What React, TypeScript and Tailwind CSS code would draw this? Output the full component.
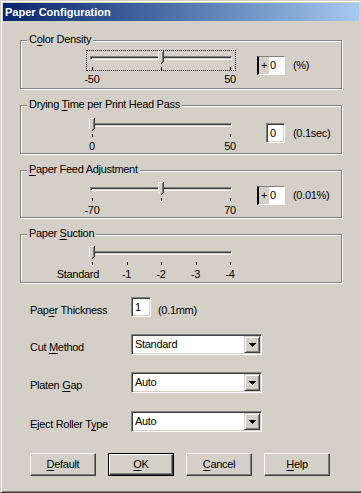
import type { ReactNode } from "react";

const raisedBtn =
  "border border-t-white border-l-white border-b-[#404040] border-r-[#404040] shadow-[inset_-1px_-1px_0_#808080]";
const sunken =
  "border border-t-[#808080] border-l-[#808080] border-b-white border-r-white shadow-[inset_1px_1px_0_#404040,inset_-1px_-1px_0_#d4d0c8]";

function U({ c }: { c: string }) {
  return <span className="underline decoration-1 underline-offset-[2px]">{c}</span>;
}

type SliderDef = {
  title: ReactNode;
  labels: string[];
  ticks: number;
  pos: number;
  focus?: boolean;
  unit: string;
  value: string;
  plus?: boolean;
  box: string;
  rowMt: string;
  editMt: string;
};

const sliders: SliderDef[] = [
  {
    title: <>C<U c="o" />lor Density</>,
    labels: ["-50", "50"],
    ticks: 3,
    pos: 0.5,
    focus: true,
    unit: "(%)",
    value: "0",
    plus: true,
    box: "mt-[19px] h-[49px]",
    rowMt: "mt-[4px]",
    editMt: "mt-[6px]",
  },
  {
    title: <>Drying <U c="T" />ime per Print Head Pass</>,
    labels: ["0", "50"],
    ticks: 2,
    pos: 0,
    unit: "(0.1sec)",
    value: "0",
    box: "mt-[16px] h-[49px]",
    rowMt: "mt-[6px]",
    editMt: "mt-[6px]",
  },
  {
    title: <><U c="P" />aper Feed Adjustment</>,
    labels: ["-70", "70"],
    ticks: 3,
    pos: 0.5,
    unit: "(0.01%)",
    value: "0",
    plus: true,
    box: "mt-[16px] h-[48px]",
    rowMt: "mt-[5px]",
    editMt: "mt-[5px]",
  },
  {
    title: <>Paper <U c="S" />uction</>,
    labels: ["Standard", "-1", "-2", "-3", "-4"],
    ticks: 5,
    pos: 0,
    unit: "",
    value: "",
    box: "mt-[16px] h-[49px]",
    rowMt: "mt-[5px]",
    editMt: "",
  },
];

function Thumb({ left }: { left: number }) {
  return (
    <svg
      className="absolute top-0"
      style={{ left }}
      width="6"
      height="14"
      viewBox="0 0 6 14"
      shapeRendering="crispEdges"
    >
      <polygon points="0,0 6,0 6,10 3,13 0,10" fill="#d4d0c8" />
      <path d="M0.5 10V0.5H5" stroke="#fff" fill="none" />
      <path d="M0.5 10.5L2.5 12.5" stroke="#fff" fill="none" />
      <path d="M4.5 1V10.5L3 12" stroke="#808080" fill="none" />
      <path d="M5.5 0V10.5L3 13" stroke="#404040" fill="none" />
    </svg>
  );
}

function Slider({ s }: { s: SliderDef }) {
  return (
    <div className="w-[150px]">
      <div
        className={`relative h-[21px] border border-dotted ${
          s.focus ? "border-black" : "border-transparent"
        }`}
      >
        <div className="ml-[3px] mt-[5px] h-[4px] w-[142px] border border-t-[#808080] border-l-[#808080] border-b-white border-r-white shadow-[inset_1px_1px_0_#404040]" />
        <div className="ml-[5px] mt-[7px] flex w-[139px] justify-between">
          {Array.from({ length: s.ticks }).map((_, i) => (
            <div key={i} className="h-[3px] w-px bg-black" />
          ))}
        </div>
        <Thumb left={2 + s.pos * 138} />
      </div>
      <div className="-ml-[6px] mt-[2px] flex w-[162px] justify-between">
        {s.labels.map((l, i) => (
          <div
            key={l}
            className={`flex w-[24px] whitespace-nowrap ${
              l === "Standard" && i === 0 ? "justify-end pr-[5px]" : "justify-center"
            }`}
          >
            {l}
          </div>
        ))}
      </div>
    </div>
  );
}

function Group({ s }: { s: SliderDef }) {
  return (
    <div
      className={`ml-[17px] w-[322px] border border-[#808080] shadow-[inset_1px_1px_0_#fff,1px_1px_0_#fff] ${s.box}`}
    >
      <div className="-mt-[8px] ml-[6px] w-fit bg-[#d4d0c8] px-[2px]">{s.title}</div>
      <div className={`ml-[65px] flex items-start ${s.rowMt}`}>
        <Slider s={s} />
        {s.unit && (
          <div className={`flex items-center ${s.editMt}`}>
            <div className="flex w-[49px] justify-end">
              {s.plus ? (
                <div className="flex h-[19px] w-[28px] border-t border-l-[2px] border-r border-b border-t-[#808080] border-l-black border-r-white border-b-white">
                  <span className="flex w-[10px] items-center justify-center">+</span>
                  <span className="flex flex-1 items-center bg-white pl-[1px]">{s.value}</span>
                </div>
              ) : (
                <div className={`flex h-[20px] w-[19px] items-center bg-white pl-[3px] ${sunken}`}>
                  {s.value}
                </div>
              )}
            </div>
            <span className="ml-[8px]">{s.unit}</span>
          </div>
        )}
      </div>
    </div>
  );
}

function Combo({ value }: { value: string }) {
  return (
    <div className={`flex h-[21px] w-[131px] items-center bg-white p-[1px] ${sunken}`}>
      <span className="flex-1 pl-[2px]">{value}</span>
      <span
        className={`flex h-[17px] w-[16px] items-center justify-center border border-t-[#d4d0c8] border-l-[#d4d0c8] border-b-[#404040] border-r-[#404040] bg-[#d4d0c8] shadow-[inset_1px_1px_0_#fff,inset_-1px_-1px_0_#808080]`}
      >
        <svg width="7" height="4" viewBox="0 0 7 4" shapeRendering="crispEdges">
          <path d="M0 0h7v1H0zM1 1h5v1H1zM2 2h3v1H2zM3 3h1v1H3z" fill="#000" />
        </svg>
      </span>
    </div>
  );
}

function Row({ label, mt, children }: { label: ReactNode; mt: string; children: ReactNode }) {
  return (
    <div className={`flex items-start ${mt}`}>
      <div className="mt-[7px] w-[101px] whitespace-nowrap">{label}</div>
      {children}
    </div>
  );
}

function Btn({ children, def }: { children: ReactNode; def?: boolean }) {
  if (def) {
    return (
      <div className="h-[23px] w-[66px] border border-black">
        <div className={`flex h-full w-full items-center justify-center ${raisedBtn}`}>{children}</div>
      </div>
    );
  }
  return (
    <div className={`flex h-[23px] w-[66px] items-center justify-center ${raisedBtn}`}>{children}</div>
  );
}

export default function App() {
  return (
    <div className="h-[493px] w-[361px] overflow-hidden border-l border-t border-b border-l-[#d4d0c8] border-t-[#d4d0c8] border-b-[#404040] bg-[#d4d0c8] pl-[2px] pt-[2px] pr-[2px] shadow-[inset_1px_1px_0_#fff,inset_0_-1px_0_#808080] font-['Liberation_Sans',Arial,sans-serif] text-[11px] leading-[13px] tracking-[-0.3px] text-black">
      <div className="flex h-[18px] items-center bg-gradient-to-r from-[#0a246a] to-[#a6caf0] pl-[2px] text-[11px] font-bold tracking-normal text-white">
        Paper Configuration
      </div>

      {sliders.map((s, i) => (
        <Group key={i} s={s} />
      ))}

      <div className="ml-[27px] mt-[14px]">
        <Row label={<>Pap<U c="e" />r Thickness</>} mt="">
          <div className={`flex h-[20px] w-[20px] items-center bg-white pl-[3px] ${sunken}`}>1</div>
          <span className="ml-[7px] mt-[7px]">(0.1mm)</span>
        </Row>
        <Row label={<>Cut <U c="M" />ethod</>} mt="mt-[17px]">
          <Combo value="Standard" />
        </Row>
        <Row label={<>Platen <U c="G" />ap</>} mt="mt-[17px]">
          <Combo value="Auto" />
        </Row>
        <Row label={<>Eject Roller T<U c="y" />pe</>} mt="mt-[18px]">
          <Combo value="Auto" />
        </Row>

        <div className="mt-[21px] flex gap-[12px]">
          <Btn>
            <U c="D" />efault
          </Btn>
          <Btn def>
            <U c="O" />K
          </Btn>
          <Btn>
            <U c="C" />ancel
          </Btn>
          <Btn>
            <U c="H" />elp
          </Btn>
        </div>
      </div>
    </div>
  );
}
